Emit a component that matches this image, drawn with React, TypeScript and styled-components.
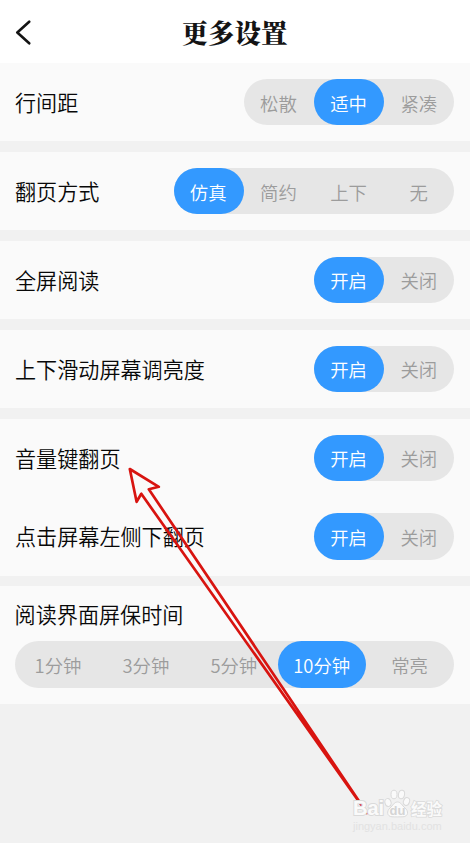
import React from 'react';
import styled, { createGlobalStyle } from 'styled-components';

const GlobalStyle = createGlobalStyle`
  * { box-sizing: border-box; }
  body {
    margin: 0;
    background: #f1f1f1;
    font-family: "Noto Sans CJK SC", "Noto Sans", sans-serif;
  }
`;

const Screen = styled.main`
  position: relative;
  width: 470px;
  height: 843px;
  overflow: hidden;
  background: #f1f1f1;
`;

const Header = styled.header`
  display: grid;
  grid-template-columns: 50px 1fr 50px;
  align-items: center;
  height: 63px;
  background: #fff;
`;

const BackButton = styled.button`
  display: flex;
  padding: 0 0 0 13px;
  border: 0;
  background: none;
`;

const Title = styled.h1`
  margin: 1px 1px 0 0;
  font: 900 26.4px/40px "Noto Serif CJK SC", "Source Han Serif SC", "Noto Sans CJK SC", serif;
  text-align: center;
  color: #141414;
`;

const Groups = styled.div`
  display: flex;
  flex-direction: column;
  gap: 10.5px;
`;

const Group = styled.section`
  background: #fafafa;
`;

const Row = styled.div`
  display: flex;
  align-items: center;
  justify-content: space-between;
  height: 78.4px;
  padding: 0 15.6px 0 15px;

  & + & { height: 79px; }
`;

const StackedRow = styled.div`
  display: flex;
  flex-direction: column;
  align-items: flex-start;
  height: 118px;
  padding: 12.5px 15.6px 0 14.6px;
  gap: 12.5px;
`;

const Label = styled.span`
  font-size: 21.1px;
  font-weight: 350;
  line-height: 30px;
  color: #080808;
  white-space: nowrap;
`;

const Segmented = styled.div`
  display: flex;
  flex: none;
  height: 46.4px;
  border-radius: 24px;
  background: #e6e6e6;
`;

const Segment = styled.button<{ $active: boolean; $wide?: boolean }>`
  width: ${p => (p.$wide ? 87.9 : 70.2)}px;
  height: 46.4px;
  padding: 1px 1px 0 0;
  border: 0;
  border-radius: 24px;
  background: ${p => (p.$active ? '#3399ff' : 'transparent')};
  color: ${p => (p.$active ? '#fff' : '#9c9c9c')};
  font-family: inherit;
  font-size: 18.4px;
  font-weight: 350;
  line-height: 26px;
  white-space: nowrap;
`;

const Pointer = styled.svg`
  position: absolute;
  left: 0;
  top: 0;
  pointer-events: none;
`;

const Watermark = styled.div`
  position: absolute;
  left: 353px;
  top: 787px;
  width: 92px;
`;

const Brand = styled.div`
  display: flex;
  align-items: flex-end;
  height: 32px;
  color: #fafafa;
`;

const BrandLatin = styled.span`
  width: 31px;
  font: 700 20px/21px "Liberation Sans", sans-serif;
  -webkit-text-stroke: 2px #dadada;
  paint-order: stroke fill;
`;

const BrandHan = styled.span`
  font: 700 15.5px/22px "Noto Sans CJK SC", sans-serif;
  -webkit-text-stroke: 1.6px #dadada;
  paint-order: stroke fill;
`;

const Paw = styled.svg`
  flex: none;
  width: 27px;
  height: 31px;
`;

const Site = styled.div`
  margin-top: 1px;
  font: 400 11px/12px "Liberation Sans", sans-serif;
  color: #e2e2e2;
  white-space: nowrap;
`;

interface ChoiceProps {
  options: string[];
  selected: number;
  wide?: boolean;
}

function Choice({ options, selected, wide }: ChoiceProps) {
  return (
    <Segmented>
      {options.map((option, i) => (
        <Segment key={option} $active={i === selected} $wide={wide}>{option}</Segment>
      ))}
    </Segmented>
  );
}

interface Setting {
  label: string;
  options: string[];
  selected: number;
}

const toggle = ['开启', '关闭'];

const groups: Setting[][] = [
  [{ label: '行间距', options: ['松散', '适中', '紧凑'], selected: 1 }],
  [{ label: '翻页方式', options: ['仿真', '简约', '上下', '无'], selected: 0 }],
  [{ label: '全屏阅读', options: toggle, selected: 0 }],
  [{ label: '上下滑动屏幕调亮度', options: toggle, selected: 0 }],
  [
    { label: '音量键翻页', options: toggle, selected: 0 },
    { label: '点击屏幕左侧下翻页', options: toggle, selected: 0 },
  ],
];

export default function App() {
  return (
    <>
      <GlobalStyle />
      <Screen>
        <Header>
          <BackButton aria-label="返回">
            <svg width="20" height="26" viewBox="0 0 20 26" fill="none" stroke="#141414" strokeWidth="2.6" strokeLinecap="round" strokeLinejoin="round">
              <path d="M16.2 2.7L4.3 13.5L16.2 24.3" />
            </svg>
          </BackButton>
          <Title>更多设置</Title>
        </Header>
        <Groups>
          {groups.map(rows => (
            <Group key={rows[0].label}>
              {rows.map(row => (
                <Row key={row.label}>
                  <Label>{row.label}</Label>
                  <Choice options={row.options} selected={row.selected} />
                </Row>
              ))}
            </Group>
          ))}
          <Group>
            <StackedRow>
              <Label>阅读界面屏保时间</Label>
              <Choice wide options={['1分钟', '3分钟', '5分钟', '10分钟', '常亮']} selected={3} />
            </StackedRow>
          </Group>
        </Groups>
        <Pointer width="470" height="843" fill="none" stroke="#d81410" strokeWidth="2.7" strokeLinejoin="round">
          <path d="M129.8 469L158.8 486.8L148.8 489.2L367 813L141.3 493.8L136.6 501.8Z" />
        </Pointer>
        <Watermark>
          <Brand>
            <BrandLatin>Bai</BrandLatin>
            <Paw viewBox="0 0 27 31" fill="#fafafa" stroke="#dadada" strokeWidth="1">
              <ellipse cx="4" cy="14.5" rx="3" ry="4" transform="rotate(-15 4 14.5)" />
              <ellipse cx="10" cy="6.5" rx="3" ry="4.3" />
              <ellipse cx="17.5" cy="6.5" rx="3" ry="4.3" transform="rotate(12 17.5 6.5)" />
              <ellipse cx="22.5" cy="13.5" rx="3" ry="4" transform="rotate(20 22.5 13.5)" />
              <path d="M13.5 14C10 14 9 17.5 6 20C2.5 23 2.8 28.5 8 28.8C11 29 15.5 28.8 19 28.8C24.5 28.5 24.8 23 21 20C18 17.5 17 14 13.5 14Z" />
              <text x="13.4" y="27" textAnchor="middle" fontFamily="Liberation Sans" fontWeight="700" fontSize="13" fill="#d4d4d4" stroke="none">du</text>
            </Paw>
            <BrandHan>经验</BrandHan>
          </Brand>
          <Site>jingyan.baidu.com</Site>
        </Watermark>
      </Screen>
    </>
  );
}
